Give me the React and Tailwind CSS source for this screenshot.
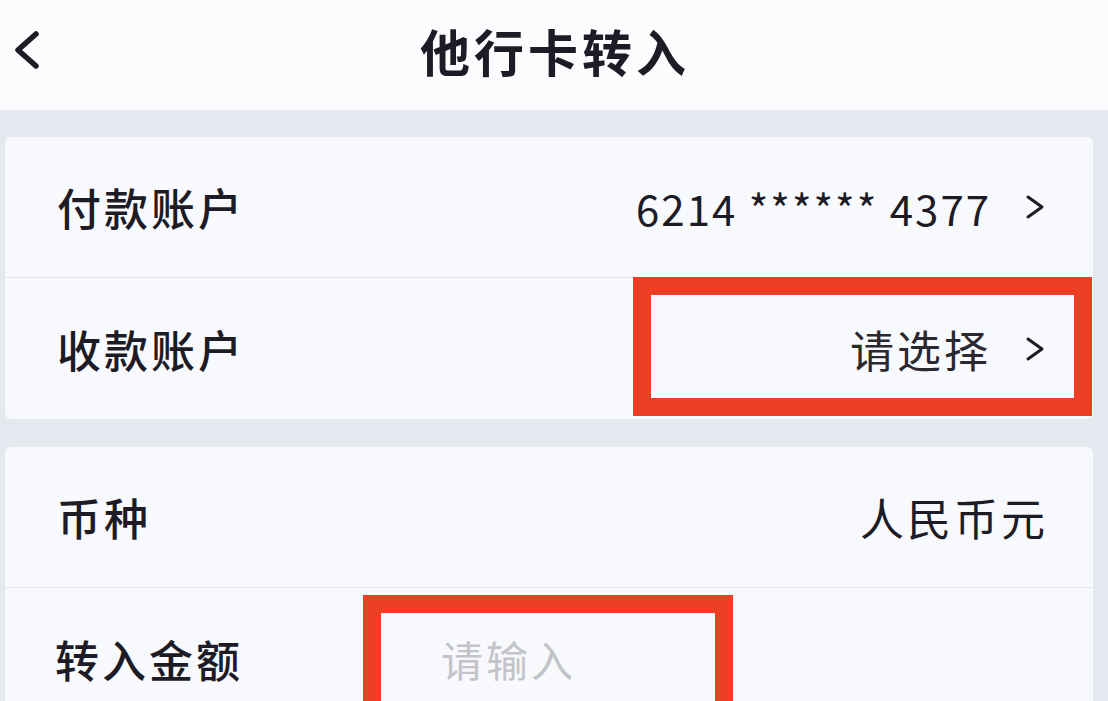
import React from "react";

const Chevron = () => (
  <svg width="20" height="26" viewBox="0 0 20 26" fill="none" className="shrink-0">
    <polyline points="3,3 17,13 3,23" stroke="#1d1b26" strokeWidth="3" strokeLinecap="round" strokeLinejoin="round" />
  </svg>
);

const Row = ({ label, children, border = false }) => (
  <div className={`relative h-[141px] flex items-center justify-between pl-[52px] pr-[48px] ${border ? "border-b border-[#e3e6eb]" : ""}`}>
    <span className="text-[44px] font-medium tracking-[3px] text-[#1d1b26]">{label}</span>
    {children}
  </div>
);

export default function App() {
  return (
    <div className="w-[1108px] h-[701px] overflow-hidden bg-[#e5e8ee] font-['Noto_Sans_CJK_SC','Noto_Sans',sans-serif]">
      {/* header */}
      <div className="relative h-[110px] bg-[#fbfcfd] flex items-center justify-center pb-[10px]">
        <svg width="34" height="40" viewBox="0 0 34 40" fill="none" className="absolute left-[9px] top-[30px]">
          <polyline points="27,4 9,20 27,36" stroke="#1d1b26" strokeWidth="5.5" strokeLinecap="round" strokeLinejoin="round" />
        </svg>
        <h1 className="text-[50px] font-semibold tracking-[4px] text-[#1d1b26] pl-[2px]">他行卡转入</h1>
      </div>

      <div className="pt-[27px] pl-[5px] pr-[15px] flex flex-col gap-[28px]">
        {/* card 1 */}
        <div className="rounded-md bg-[#f7f9fc]">
          <Row label="付款账户" border>
            <div className="flex items-center gap-[34px]">
              <span className="text-[42px] tracking-[2px] text-[#1d1b26]">6214 ****** 4377</span>
              <Chevron />
            </div>
          </Row>
          <Row label="收款账户">
            <div className="flex items-center gap-[34px]">
              <span className="text-[44px] tracking-[3px] text-[#2a2830]">请选择</span>
              <Chevron />
            </div>
            <div className="absolute left-[628px] top-[-1px] w-[459px] h-[139px] border-[18px] border-[#ee3e24]" />
          </Row>
        </div>

        {/* card 2 */}
        <div className="rounded-md bg-[#f7f9fc]">
          <Row label="币种" border>
            <span className="text-[44px] tracking-[3px] text-[#1d1b26] -mr-[3px]">人民币元</span>
          </Row>
          <div className="relative h-[141px] flex items-center pl-[50px]">
            <span className="w-[386px] text-[44px] font-medium tracking-[3px] text-[#1d1b26]">转入金额</span>
            <input
              placeholder="请输入"
              className="w-[260px] bg-transparent outline-none text-[42px] tracking-[3px] text-[#1d1b26] placeholder:text-[#c3c4c9]"
            />
            <div className="absolute left-[358px] top-[7px] w-[370px] h-[150px] border-[18px] border-[#ee3e24]" />
          </div>
        </div>
      </div>
    </div>
  );
}
